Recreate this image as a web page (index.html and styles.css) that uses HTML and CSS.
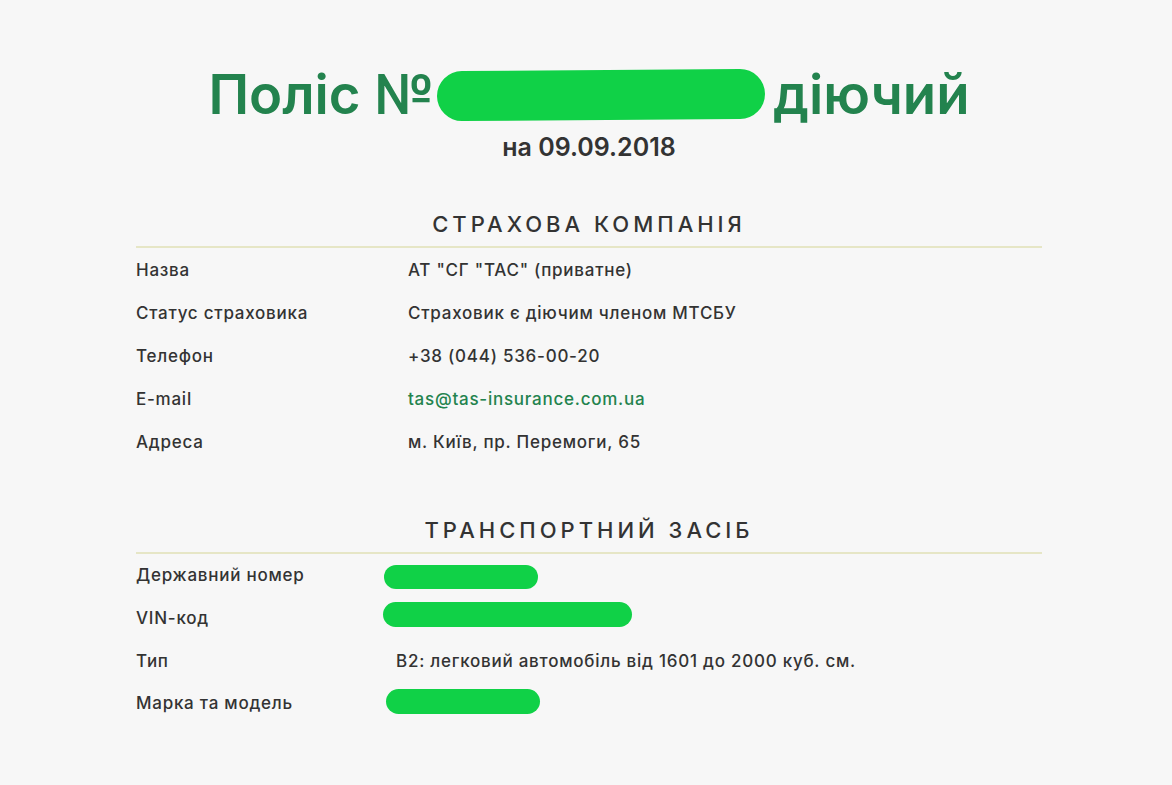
FILE: index.html
```html
<!DOCTYPE html>
<html lang="uk">
<head>
<meta charset="utf-8">
<title>Поліс</title>
<link rel="stylesheet" href="styles.css">
</head>
<body>
<main class="policy">
  <h1 class="title"><span>Поліс №</span><span class="redact redact-title"></span><span>діючий</span></h1>
  <p class="date">на 09.09.2018</p>

  <section class="block">
    <h2 class="block-title">СТРАХОВА КОМПАНІЯ</h2>
    <div class="rows rows-company">
      <div class="label">Назва</div><div class="value">АТ "СГ "ТАС" (приватне)</div>
      <div class="label">Статус страховика</div><div class="value">Страховик є діючим членом МТСБУ</div>
      <div class="label">Телефон</div><div class="value">+38 (044) 536-00-20</div>
      <div class="label">E-mail</div><div class="value"><a class="link" href="#">tas@tas-insurance.com.ua</a></div>
      <div class="label">Адреса</div><div class="value">м. Київ, пр. Перемоги, 65</div>
    </div>
  </section>

  <section class="block block-vehicle">
    <h2 class="block-title">ТРАНСПОРТНИЙ ЗАСІБ</h2>
    <div class="rows rows-vehicle">
      <div class="label">Державний номер</div><div class="value"><span class="redact redact-plate"></span></div>
      <div class="label">VIN-код</div><div class="value"><span class="redact redact-vin"></span></div>
      <div class="label">Тип</div><div class="value">B2: легковий автомобіль від 1601 до 2000 куб. см.</div>
      <div class="label">Марка та модель</div><div class="value"><span class="redact redact-brand"></span></div>
    </div>
  </section>
</main>
</body>
</html>
```

FILE: styles.css
```css
html, body {
  margin: 0;
  background: #f7f7f7;
}
body {
  padding: 60px 0 40px 6px;
  font-family: Inter, "Noto Sans", sans-serif;
  color: #333333;
}
.policy {
  width: 906px;
  margin: 0 auto;
}
.title {
  margin: 0;
  display: flex;
  justify-content: center;
  align-items: center;
  font-size: 54.5px;
  line-height: 69px;
  font-weight: 600;
  color: #23834e;
}
.redact {
  display: inline-block;
  background: #10d147;
  border-radius: 14px;
}
.redact-title {
  width: 328px;
  height: 50px;
  border-radius: 26px;
  transform: rotate(-0.4deg);
  margin: 0 8px 0 3px;
}
.date {
  margin: 3px 0 0;
  text-align: center;
  font-size: 25px;
  line-height: 30px;
  font-weight: 600;
}
.block {
  margin-top: 47px;
}
.block-vehicle {
  margin-top: 52px;
}
.block-title {
  margin: 0;
  padding-bottom: 7px;
  border-bottom: 2px solid #e6e6c6;
  text-align: center;
  font-size: 22px;
  line-height: 30px;
  font-weight: 500;
  letter-spacing: 4px;
}
.rows {
  display: grid;
  grid-template-columns: 272px 1fr;
  grid-auto-rows: 43px;
  align-items: center;
  font-size: 17px;
  font-weight: 500;
  letter-spacing: 0.75px;
}
.rows-vehicle {
  grid-template-columns: 260px 1fr;
  grid-auto-rows: 42.7px;
}
.link {
  color: #23834e;
  text-decoration: none;
}
.redact-plate {
  width: 154px;
  height: 24px;
  margin: 8px 0 0 -12px;
}
.redact-vin {
  width: 249px;
  height: 25px;
  margin: -3px 0 0 -13px;
}
.redact-brand {
  width: 154px;
  height: 25px;
  margin: 1px 0 0 -10px;
}
```
